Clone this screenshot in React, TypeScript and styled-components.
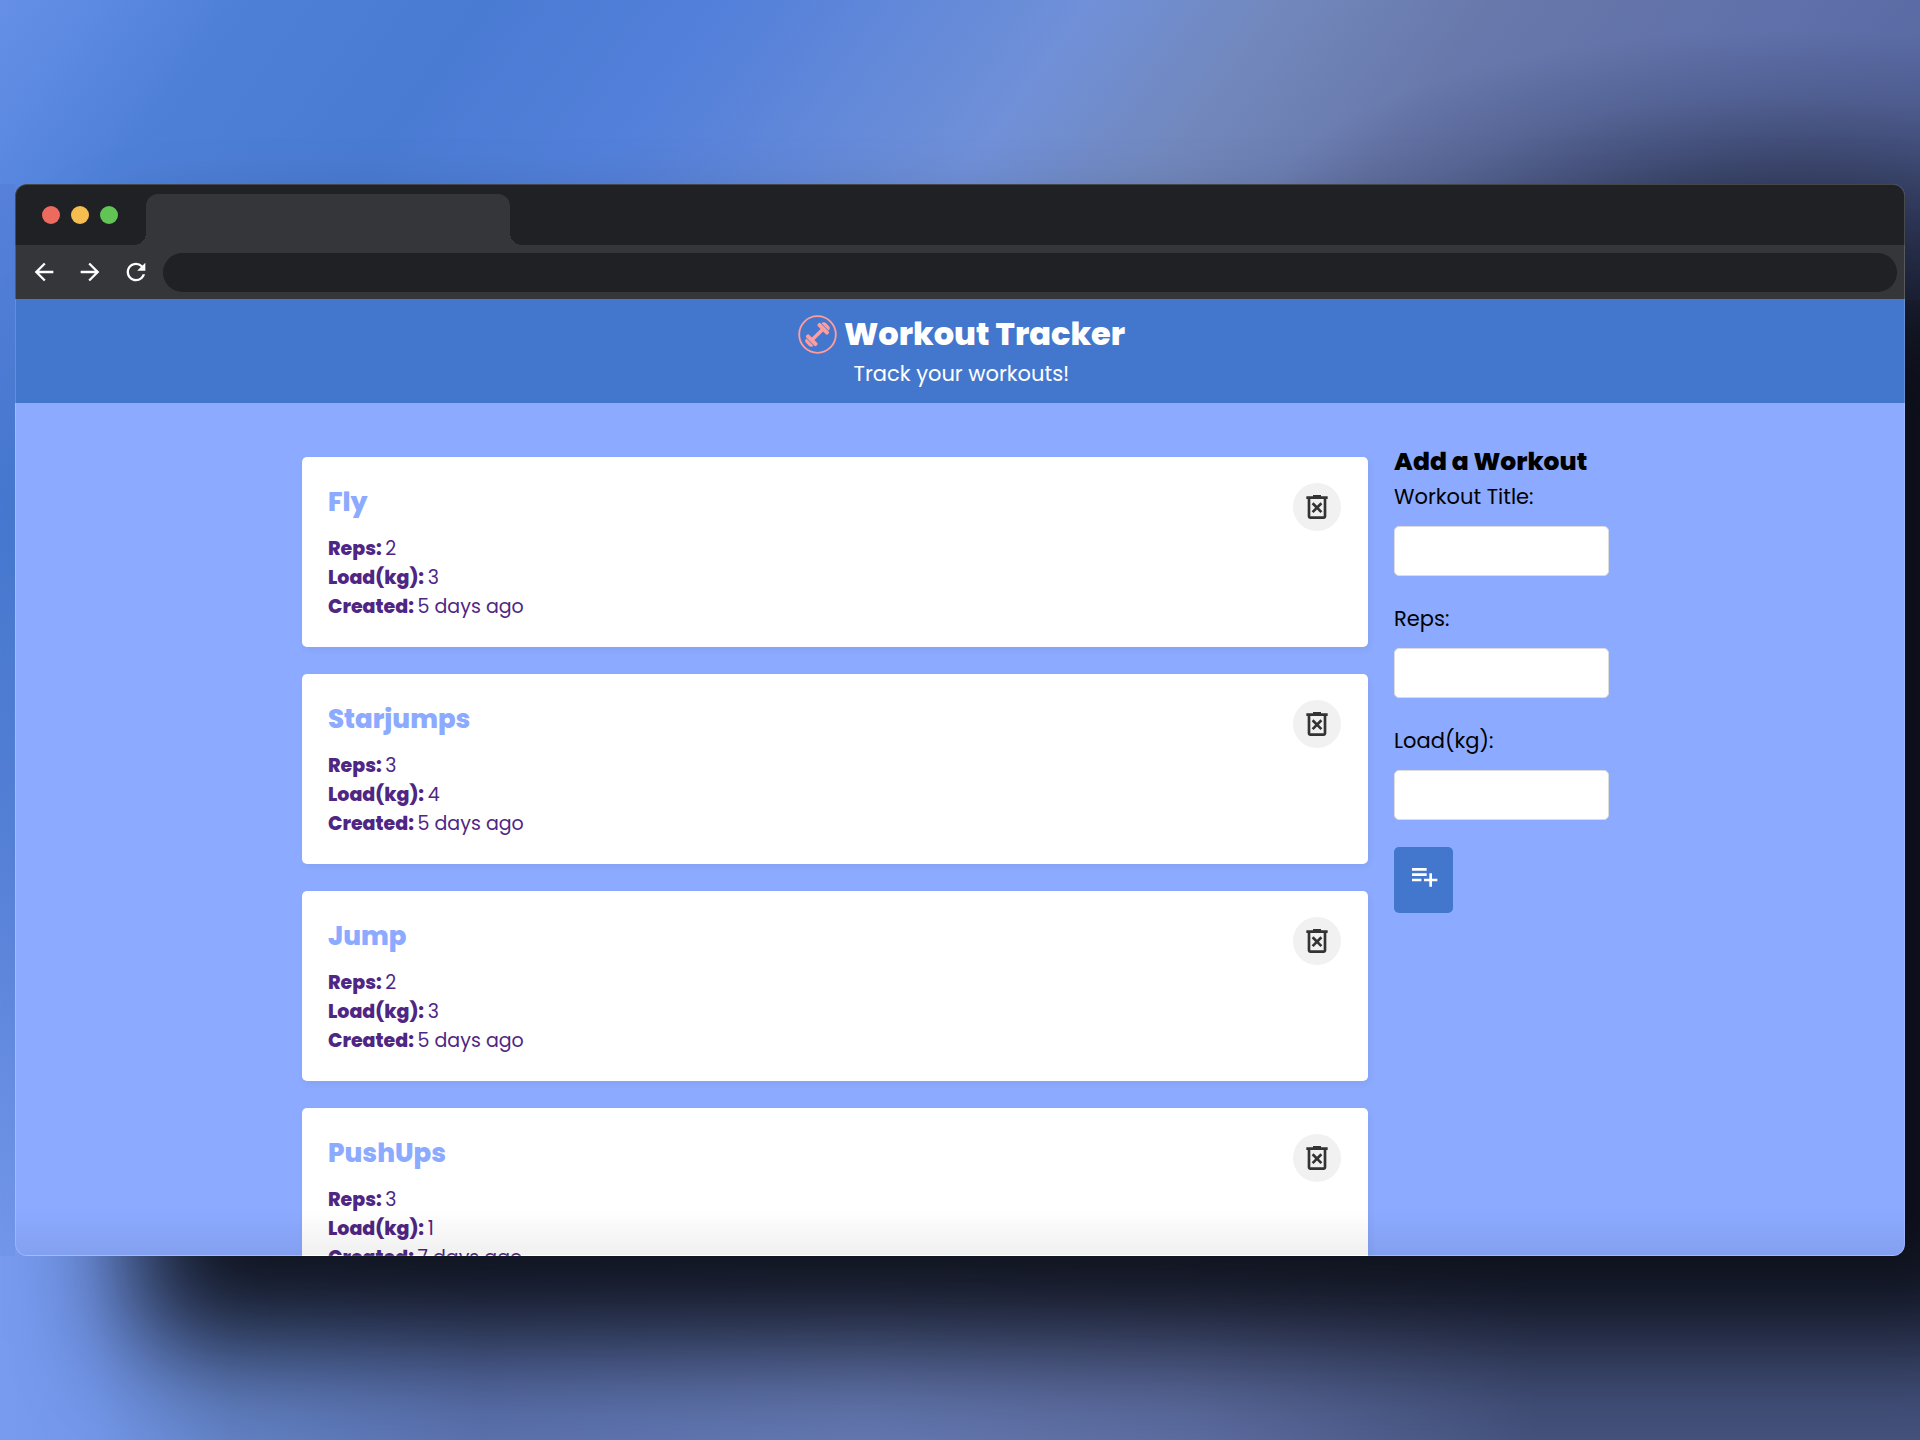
import React from "react";
import styled, { createGlobalStyle } from "styled-components";
import { MdArrowBack, MdArrowForward, MdRefresh } from "react-icons/md";

const Global = createGlobalStyle`
  * { box-sizing: border-box; margin: 0; }
  body { font-family: Poppins, Inter, "Liberation Sans", sans-serif; background: #5c7fd6; }
`;

const Desktop = styled.div`
  height: 100vh;
  padding: 184px 15px;
  display: flex;
  overflow: hidden;
  background:
    radial-gradient(ellipse 28% 210px at 93% 240px, rgba(24, 30, 50, 0.75) 0%, rgba(32, 38, 60, 0.55) 35%, rgba(40, 48, 76, 0.22) 70%, rgba(50, 60, 90, 0) 100%),
    linear-gradient(180deg, #5680da 0%, #4678cf 30%, #5480d6 60%, #7397ea 100%) 0 184px / 15px calc(100% - 368px) no-repeat,
    linear-gradient(126deg, #6690e8 0%, #4f80d8 11%, #4a7bd3 23%, #5380da 34%, #7090d8 51%, #7288bd 60%, #6878ab 70%, #5f70aa 84%, #54639c 100%) 0 0 / 100% 300px no-repeat,
    linear-gradient(90deg, #789bf0 0%, #7397ea 5%, #6484c8 12%, #5d74b2 25%, #667bb5 45%, #5f6fa4 62%, #465480 80%, #465480 100%) 0 100% / 100% 50% no-repeat,
    #46527c;
`;

const Window = styled.div`
  position: relative;
  flex: 1;
  min-width: 0;
  display: flex;
  flex-direction: column;
  overflow: hidden;
  border-radius: 12px;
  background: #8caaff;
  box-shadow: 120px 88px 112px rgba(9, 12, 20, 0.95);

  &::after {
    content: "";
    position: absolute;
    inset: 0;
    border: 1px solid rgba(255, 255, 255, 0.18);
    border-radius: 12px;
    background: linear-gradient(0deg, rgba(0, 0, 0, 0.06), rgba(0, 0, 0, 0) 45px);
    pointer-events: none;
  }
`;

const TabStrip = styled.div`
  height: 61px;
  flex: none;
  display: flex;
  align-items: flex-end;
  background: #202124;
`;

const Lights = styled.div`
  width: 131px;
  height: 61px;
  padding-left: 27px;
  display: flex;
  align-items: center;
  gap: 11px;
`;

const Light = styled.span<{ $color: string }>`
  width: 18px;
  height: 18px;
  border-radius: 50%;
  background: ${(p) => p.$color};
`;

const Tab = styled.div`
  position: relative;
  width: 364px;
  height: 51px;
  border-radius: 12px 12px 0 0;
  background: #35363a;

  &::before,
  &::after {
    content: "";
    position: absolute;
    bottom: 0;
    width: 12px;
    height: 12px;
  }
  &::before {
    right: 100%;
    background: radial-gradient(circle at 0 0, #202124 12px, #35363a 12px);
  }
  &::after {
    left: 100%;
    background: radial-gradient(circle at 100% 0, #202124 12px, #35363a 12px);
  }
`;

const Toolbar = styled.div`
  height: 54px;
  flex: none;
  display: flex;
  align-items: center;
  gap: 13px;
  padding: 0 8px 0 15px;
  background: #35363a;
`;

const Navigation = styled.nav`
  display: flex;
  gap: 18px;
`;

const NavButton = styled.button`
  display: flex;
  padding: 0;
  border: 0;
  background: none;
  color: #fff;
  font-size: 28px;
`;

const Address = styled.input`
  flex: 1;
  min-width: 0;
  height: 39px;
  padding: 0 20px;
  border: 0;
  border-radius: 20px;
  background: #202124;
  color: #fff;
`;

const Header = styled.header`
  flex: none;
  display: flex;
  flex-direction: column;
  align-items: center;
  padding: 11px 0 13px 3px;
  background: #4377ce;
  color: #fff;
`;

const Brand = styled.h1`
  display: flex;
  align-items: center;
  gap: 7px;
  font-size: 32px;
  line-height: 48px;
  font-weight: 800;
`;

const Tagline = styled.p`
  font-size: 21px;
  line-height: 32px;
`;

const Main = styled.main`
  flex: 1;
  min-height: 0;
  width: 100%;
  max-width: 1316px;
  margin: 0 auto;
  display: grid;
  grid-template-columns: minmax(0, 1fr) 224px;
  align-items: start;
  gap: 26px;
  padding-top: 43px;
`;

const List = styled.section`
  display: flex;
  flex-direction: column;
  gap: 27px;
  padding-top: 11px;
`;

const Card = styled.article`
  display: flex;
  justify-content: space-between;
  align-items: flex-start;
  padding: 26px 27px 26px 26px;
  border-radius: 5px;
  background: #fff;
  color: #4f2683;
  box-shadow: 2px 3px 7px rgba(0, 0, 0, 0.05);
`;

const CardTitle = styled.h2`
  margin-bottom: 13px;
  font-size: 26px;
  line-height: 38px;
  font-weight: 800;
  color: #8caaff;
`;

const Fact = styled.p`
  font-size: 19px;
  line-height: 29px;
`;

const Label = styled.strong`
  font-weight: 800;
`;

const DeleteButton = styled.button`
  width: 48px;
  height: 48px;
  display: flex;
  align-items: center;
  justify-content: center;
  padding: 0;
  border: 0;
  border-radius: 50%;
  background: #f1f1f1;
  color: #333;
`;

const Form = styled.form`
  padding-right: 9px;
`;

const FormTitle = styled.h2`
  margin-bottom: 3px;
  font-size: 25px;
  line-height: 32px;
  font-weight: 800;
`;

const Field = styled.label`
  display: block;
  font-size: 21px;
  line-height: 32px;
`;

const Input = styled.input`
  display: block;
  width: 100%;
  height: 50px;
  margin: 13px 0 27px;
  padding: 0 13px;
  border: 1px solid #ddd;
  border-radius: 5px;
  background: #fff;
`;

const AddButton = styled.button`
  width: 59px;
  height: 66px;
  display: flex;
  justify-content: center;
  padding: 13px 0;
  border: 0;
  border-radius: 5px;
  background: #4377ce;
  color: #fff;
`;

const DumbbellLogo = () => (
  <svg width="39" height="39" viewBox="0 0 40 40" aria-hidden="true">
    <circle cx="20" cy="20" r="18.8" fill="none" stroke="#ff9d9d" strokeWidth="1.9" />
    <g transform="rotate(-45 20 20)" fill="#ff9d9d">
      <rect x="13" y="18.2" width="14" height="3.6" />
      <rect x="9.6" y="12.6" width="4.2" height="14.8" rx="1.8" />
      <rect x="26.2" y="12.6" width="4.2" height="14.8" rx="1.8" />
      <path d="M9 14.8v10.4C7 25.2 5.600 24 5.600 22v-4c0-2 1.400-3.200 3.400-3.200Z" />
      <path d="M31 14.800v10.400c2 0 3.400-1.200 3.400-3.200v-4c0-2-1.400-3.200-3.400-3.200Z" />
    </g>
  </svg>
);

const TrashIcon = () => (
  <svg width="32" height="32" viewBox="0 0 24 24" fill="currentColor" aria-hidden="true">
    <path d="m9.4 16.5 2.6-2.6 2.6 2.6 1.4-1.4-2.6-2.6L16 9.9l-1.4-1.4-2.6 2.6-2.6-2.6L8 9.9l2.6 2.6L8 15.1ZM7 21q-.825 0-1.412-.587Q5 19.825 5 19V6H4V4h5V3h6v1h5v2h-1v13q0 .825-.587 1.413Q17.825 21 17 21ZM17 6H7v13h10Z" />
  </svg>
);

const PlaylistAddIcon = () => (
  <svg width="32" height="32" viewBox="0 0 24 24" fill="currentColor" aria-hidden="true">
    <path d="M3 16v-2h7v2Zm0-4v-2h11v2Zm0-4V6h11v2Zm13 12v-4h-4v-2h4v-4h2v4h4v2h-4v4Z" />
  </svg>
);

const workouts = [
  { title: "Fly", reps: 2, load: 3, created: "5 days ago" },
  { title: "Starjumps", reps: 3, load: 4, created: "5 days ago" },
  { title: "Jump", reps: 2, load: 3, created: "5 days ago" },
  { title: "PushUps", reps: 3, load: 1, created: "7 days ago" },
];

export default function App() {
  return (
    <Desktop>
      <Global />
      <Window>
        <TabStrip>
          <Lights>
            <Light $color="#ed6a5e" />
            <Light $color="#f5bd4f" />
            <Light $color="#61c454" />
          </Lights>
          <Tab />
        </TabStrip>
        <Toolbar>
          <Navigation>
            <NavButton aria-label="Back"><MdArrowBack /></NavButton>
            <NavButton aria-label="Forward"><MdArrowForward /></NavButton>
            <NavButton aria-label="Reload"><MdRefresh /></NavButton>
          </Navigation>
          <Address aria-label="Address" />
        </Toolbar>
        <Header>
          <Brand><DumbbellLogo />Workout Tracker</Brand>
          <Tagline>Track your workouts!</Tagline>
        </Header>
        <Main>
          <List>
            {workouts.map((w) => (
              <Card key={w.title}>
                <div>
                  <CardTitle>{w.title}</CardTitle>
                  <Fact><Label>Reps: </Label>{w.reps}</Fact>
                  <Fact><Label>Load(kg): </Label>{w.load}</Fact>
                  <Fact><Label>Created: </Label>{w.created}</Fact>
                </div>
                <DeleteButton aria-label={`Delete ${w.title}`}><TrashIcon /></DeleteButton>
              </Card>
            ))}
          </List>
          <Form>
            <FormTitle>Add a Workout</FormTitle>
            <Field>Workout Title:<Input type="text" /></Field>
            <Field>Reps:<Input type="number" /></Field>
            <Field>Load(kg):<Input type="number" /></Field>
            <AddButton type="button" aria-label="Add workout"><PlaylistAddIcon /></AddButton>
          </Form>
        </Main>
      </Window>
    </Desktop>
  );
}
